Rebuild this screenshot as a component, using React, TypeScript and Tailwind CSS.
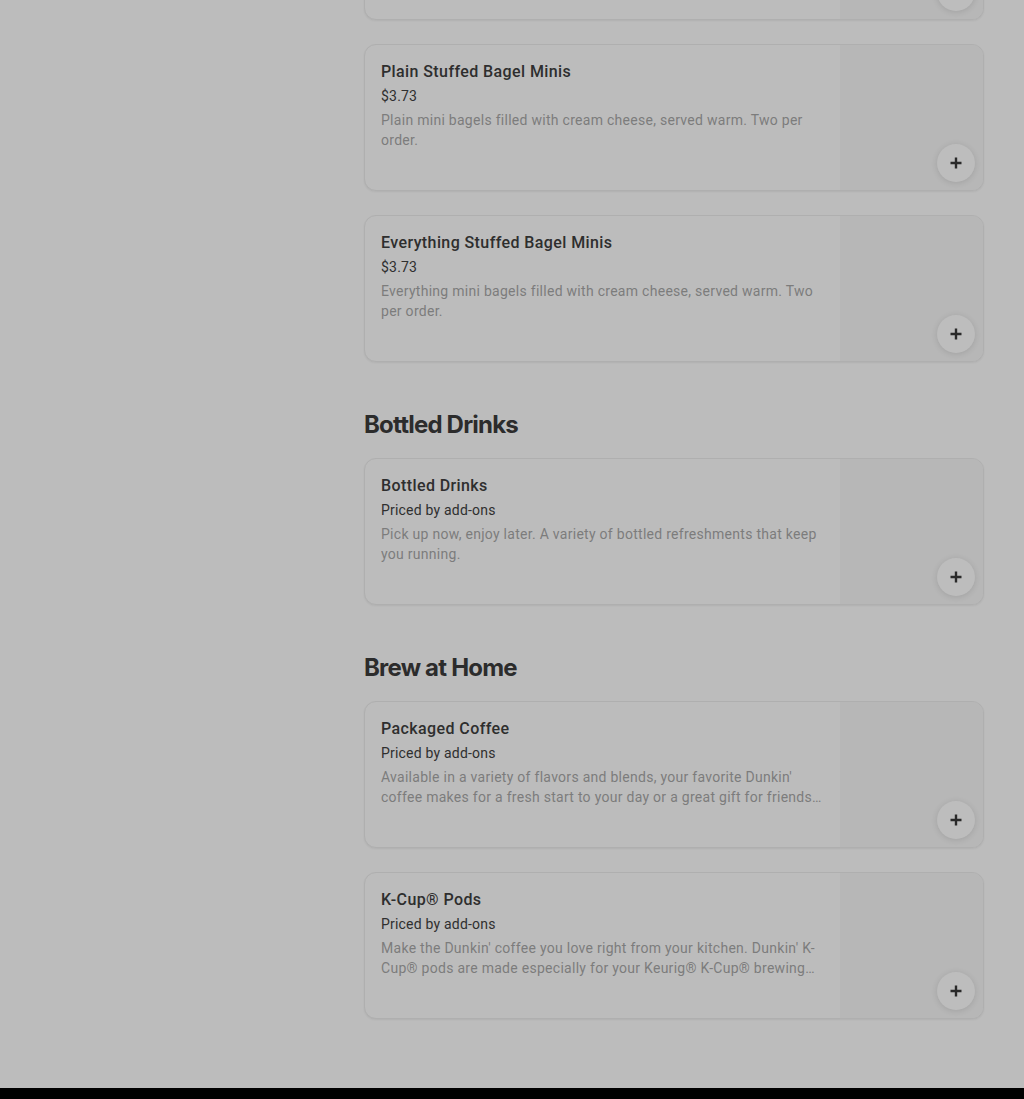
import React from "react";

interface Item {
  name: string;
  price: string;
  description: string;
}

const topItems: Item[] = [
  { name: "Cinnamon Sugar Stuffed Bagel Minis", price: "$3.73", description: "Mini bagels filled with cream cheese, served warm. Two per order." },
  { name: "Plain Stuffed Bagel Minis", price: "$3.73", description: "Plain mini bagels filled with cream cheese, served warm. Two per order." },
  { name: "Everything Stuffed Bagel Minis", price: "$3.73", description: "Everything mini bagels filled with cream cheese, served warm. Two per order." },
];

const bottled: Item[] = [
  { name: "Bottled Drinks", price: "Priced by add-ons", description: "Pick up now, enjoy later. A variety of bottled refreshments that keep you running." },
];

const brew: Item[] = [
  {
    name: "Packaged Coffee",
    price: "Priced by add-ons",
    description:
      "Available in a variety of flavors and blends, your favorite Dunkin' coffee makes for a fresh start to your day or a great gift for friends, family and coworkers.",
  },
  {
    name: "K-Cup® Pods",
    price: "Priced by add-ons",
    description:
      "Make the Dunkin' coffee you love right from your kitchen. Dunkin' K-Cup® pods are made especially for your Keurig® K-Cup® brewing system.",
  },
];

function PlusIcon() {
  return (
    <svg width="14" height="14" viewBox="0 0 14 14" fill="none">
      <path d="M7 1.5v11M1.5 7h11" stroke="#2a2a2a" strokeWidth="2.4" />
    </svg>
  );
}

function ItemCard({ item }: { item: Item }) {
  return (
    <div className="relative flex h-[147px] rounded-xl border border-[#afafaf] bg-[#bcbcbc] shadow-[0_1px_2px_rgba(0,0,0,0.06)] overflow-hidden">
      <div className="flex-1 min-w-0 pl-4 pr-4 pt-[15px]">
        <p className="text-base leading-6 font-medium tracking-[0.4px] text-[#2e2e2e]">{item.name}</p>
        <p className="mt-[2px] text-sm leading-5 tracking-[0.2px] text-[#2f2f2f]">{item.price}</p>
        <p className="mt-1 w-[443px] text-sm leading-5 tracking-[0.28px] text-[#7c7c7c] line-clamp-2">{item.description}</p>
      </div>
      <div className="w-[143px] shrink-0 bg-[#b7b7b7]" />
      {/* Add button */}
      <button className="absolute right-2 bottom-2 w-[38px] h-[38px] rounded-full bg-[#bdbdbd] shadow-[0_1px_6px_rgba(0,0,0,0.12)] flex items-center justify-center">
        <PlusIcon />
      </button>
    </div>
  );
}

function Section({ title, items }: { title: string; items: Item[] }) {
  return (
    <section className="mt-[47px]">
      <h2 className="text-2xl leading-8 font-bold tracking-[-0.8px] text-[#2c2c2c] mb-[17px]" style={{ fontFamily: "Inter, sans-serif" }}>
        {title}
      </h2>
      <div className="flex flex-col gap-6">
        {items.map((it) => (
          <ItemCard key={it.name} item={it} />
        ))}
      </div>
    </section>
  );
}

export default function App() {
  return (
    <div className="min-h-[1099px] bg-[#bcbcbc] flex flex-col overflow-hidden" style={{ fontFamily: "Roboto, 'Liberation Sans', sans-serif" }}>
      <div className="flex flex-1">
        <aside className="w-[364px] shrink-0" />
        <main className="w-[620px] -mt-[127px] pb-[69px]">
          <div className="flex flex-col gap-6">
            {topItems.map((it) => (
              <ItemCard key={it.name} item={it} />
            ))}
          </div>
          <Section title="Bottled Drinks" items={bottled} />
          <Section title="Brew at Home" items={brew} />
        </main>
      </div>
      <footer className="h-[11px] bg-black" />
    </div>
  );
}
